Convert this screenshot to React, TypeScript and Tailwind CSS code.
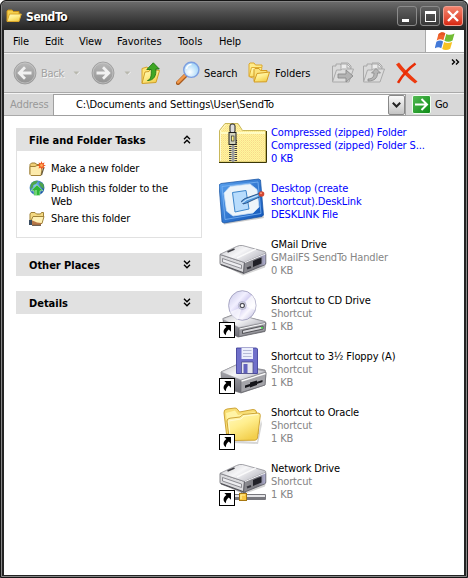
import React from "react";

type IconProps = { className?: string };

function Defs() {
  return (
    <svg width="0" height="0" className="absolute">
      <defs>
        <linearGradient id="fold" x1="0" y1="0" x2="0.6" y2="1">
          <stop offset="0" stopColor="#fffbc4" />
          <stop offset="0.5" stopColor="#ffee8e" />
          <stop offset="1" stopColor="#f3cf4c" />
        </linearGradient>
        <linearGradient id="metal" x1="0" y1="0" x2="1" y2="0.6">
          <stop offset="0" stopColor="#c8c8cc" />
          <stop offset="0.5" stopColor="#f6f6f8" />
          <stop offset="1" stopColor="#bcbcc4" />
        </linearGradient>
        <linearGradient id="side" x1="0" y1="0" x2="0" y2="1">
          <stop offset="0" stopColor="#b4b4ba" />
          <stop offset="1" stopColor="#6c6c74" />
        </linearGradient>
        <linearGradient id="face" x1="0" y1="0" x2="1" y2="0">
          <stop offset="0" stopColor="#8d8d92" />
          <stop offset="0.65" stopColor="#77777e" />
          <stop offset="1" stopColor="#b3b2d6" />
        </linearGradient>
        <linearGradient id="disc" x1="0" y1="0" x2="1" y2="1">
          <stop offset="0" stopColor="#c4c4e4" />
          <stop offset="0.35" stopColor="#f2f0ff" />
          <stop offset="0.5" stopColor="#d2cdf0" />
          <stop offset="0.7" stopColor="#faf8ff" />
          <stop offset="1" stopColor="#b4b2d8" />
        </linearGradient>
        <linearGradient id="nav" x1="0" y1="0" x2="0" y2="1">
          <stop offset="0" stopColor="#bababa" />
          <stop offset="1" stopColor="#929292" />
        </linearGradient>
        <linearGradient id="go" x1="0" y1="0" x2="1" y2="1">
          <stop offset="0" stopColor="#55bb55" />
          <stop offset="1" stopColor="#0b8a14" />
        </linearGradient>
        <linearGradient id="blue" x1="0" y1="0" x2="1" y2="1">
          <stop offset="0" stopColor="#5ba2ee" />
          <stop offset="1" stopColor="#0e52b6" />
        </linearGradient>
        <radialGradient id="lens" cx="0.4" cy="0.65" r="0.65">
          <stop offset="0" stopColor="#ffffff" />
          <stop offset="1" stopColor="#9fd4f8" />
        </radialGradient>
        <radialGradient id="globe" cx="0.35" cy="0.3" r="0.75">
          <stop offset="0" stopColor="#7fc4ff" />
          <stop offset="1" stopColor="#0b4a9c" />
        </radialGradient>
        <pattern id="dither" width="2" height="2" patternUnits="userSpaceOnUse">
          <rect width="2" height="2" fill="#fff79c" />
          <rect width="1" height="1" fill="#f8d88c" />
          <rect x="1" y="1" width="1" height="1" fill="#fbe594" />
        </pattern>
      </defs>
    </svg>
  );
}

function TitleFolder({ className }: IconProps) {
  return (
    <svg className={className} width="16" height="14" viewBox="0 0 16 14">
      <path d="M1 12V2l1-1h4l1.500 1.500H13V5" fill="#f5cf4a" stroke="#c9921c" />
      <path d="M1 12.500 3.500 5H15.300L13 12.500Z" fill="url(#fold)" stroke="#d9a62a" />
    </svg>
  );
}

function Flag() {
  return (
    <svg width="20" height="19" viewBox="0 0 20 19">
      <path d="M3.500 2C6-.2 8-.2 10.300 1.300L8.400 8.300C6 6.800 4 7 1.700 8.600Z" fill="#f0642c" />
      <path d="M11.300 1.900C14 3.400 16.500 3 19.500 1.600L17.500 8.500C15 10 12 10 9.400 8.800Z" fill="#72bc35" />
      <path d="M1.400 9.700C4 8 6 8 8.100 9.400L6.300 16.300C4.200 14.800 2 15 -.3 16.500Z" fill="#4279d8" />
      <path d="M9.100 10C11.500 11.500 14 11.300 17.200 9.900L15.200 16.700C12.500 18.300 9.500 18.300 7.200 17Z" fill="#f8c222" />
      <path d="M3.500 2C6-.2 8-.2 10.300 1.300L9.700 3.500C7.500 2.200 5 2.400 3 4Z" fill="#d9461c" opacity=".5" />
    </svg>
  );
}

function NavArrow({ flip = false }: { flip?: boolean }) {
  return (
    <svg width="24" height="24" viewBox="0 0 24 24" className={flip ? "-scale-x-100" : ""}>
      <circle cx="12" cy="12" r="11" fill="url(#nav)" stroke="#999" strokeWidth=".8" />
      <circle cx="12" cy="12" r="10" fill="none" stroke="#c8c8c8" strokeWidth=".7" />
      <path d="M18.500 12H7M12 6.300 6.300 12 12 17.700" fill="none" stroke="#f1f1f1" strokeWidth="2.800" />
    </svg>
  );
}

function Caret() {
  return (
    <svg width="7" height="4" viewBox="0 0 7 4">
      <path d="M.5.500h5.500L3.200 3.500Z" fill="#b8b8ad" />
      <path d="M4 4 7 1" stroke="#efefef" strokeWidth=".7" />
    </svg>
  );
}

function UpFolder() {
  return (
    <svg width="20" height="23" viewBox="0 0 20 23">
      <path d="M1 21V6.500l5-1.500 2 2 7-1V19Z" fill="#ffe477" stroke="#d6a52d" />
      <path d="M1 21.500 4 10l4-.5 1-2 9.500 1L15 20.500Z" fill="url(#fold)" stroke="#d0a02a" />
      <path d="M6.500 18.500C10 17.500 10.500 14 10.200 7.500H5.800L12.300.800 18.300 7H14.800C15.500 13.500 13 18.500 6.500 18.500Z" fill="#3fa725" stroke="#1f7714" strokeWidth=".9" />
    </svg>
  );
}

function SearchIcon() {
  return (
    <svg width="24" height="24" viewBox="0 0 24 24">
      <path d="M2 22 9.500 14.500" stroke="#a85b1e" strokeWidth="4.200" strokeLinecap="round" />
      <path d="M2 21.300 9 14.300" stroke="#f29a4c" strokeWidth="2.400" strokeLinecap="round" />
      <circle cx="15.300" cy="8.800" r="7.600" fill="url(#lens)" stroke="#7c9ee0" strokeWidth="1.400" />
      <path d="M10.500 8a5 5 0 0 1 5-4.500" fill="none" stroke="#fff" strokeWidth="1.600" />
    </svg>
  );
}

function FoldersIcon() {
  return (
    <svg width="23" height="22" viewBox="0 0 23 22">
      <path d="M1 14.500V2l1-1h4l1.500 2H14v2M1 14.500 5 16" fill="#ffec8a" stroke="#dca72c" />
      <path d="M1.200 14.500 3.500 5.500H14L12 15Z" fill="url(#fold)" stroke="#e0ae35" />
      <path d="M6 19V7.500l1-1h4L12.500 8.500H19v3L12 15Z" fill="#fbe27a" stroke="#d49c22" />
      <path d="M6 20 9 11.500 21.500 10 18.500 19.800Z" fill="url(#fold)" stroke="#d49c22" />
    </svg>
  );
}

function GrayFile({ copy = false }: { copy?: boolean }) {
  return (
    <svg width="24" height="22" viewBox="0 0 24 22">
      <path d="M1.500 19V4H5V2h4l1 1V1h7l3 3v7" fill="#dadada" stroke="#a8a8a8" />
      <path d="M10 13V2h6l3.500 3.500V13Z" fill="#ececec" stroke="#aaa" />
      <path d="M16 2v4h3.500" fill="none" stroke="#aaa" />
      <path d="M1.500 20 5.500 8H10l1.500-1H22.500L18 20Z" fill="#dcdcdc" stroke="#aaa" />
      {copy ? (
        <path d="M6 17c5 0 6-3 6-6H9.500L14 6.500 18.500 11H15.500c0 5-3 8-9.500 8Z" fill="#b6b6b6" stroke="#888" strokeWidth=".8" />
      ) : (
        <path d="M7 12h8V8l7 6-7 6v-4H7Z" fill="#b3b3b3" stroke="#8b8b8b" strokeWidth=".9" />
      )}
    </svg>
  );
}

function DeleteIcon() {
  return (
    <svg width="24" height="23" viewBox="0 0 24 23">
      <path d="M1 2.500 4 .5Q10 8.500 22.500 19.500L20 21.500Q8 12.500 1 2.500Z" fill="#ed3b10" />
      <path d="M20.500 1.500Q10 9 3 20.800" fill="none" stroke="#e92d05" strokeWidth="2.600" />
    </svg>
  );
}

function NewFolder() {
  return (
    <svg width="17" height="16" viewBox="0 0 17 16">
      <path d="M1 13V3.500L2.500 2H6l2 1.500h5V6" fill="#f0cf75" stroke="#9d7f35" />
      <path d="M1 13.500V5.500h5l2-1h5.500L12 14.500H2Z" fill="#fdebac" stroke="#a38238" />
      <path d="M12.500 14 15 6" stroke="#635638" strokeWidth="1.200" />
      <path d="m12.500 0 .8 2.300 2.200-.8-.8 2.200 2.300.8-2.300.8.8 2.200-2.200-.8-.8 2.300-.8-2.300-2.200.8.8-2.200L8 4.500l2.300-.8-.8-2.200 2.200.8Z" fill="#f05a21" />
      <circle cx="12.500" cy="4.400" r="1.300" fill="#ffb15b" />
    </svg>
  );
}

function GlobeIcon() {
  return (
    <svg width="17" height="17" viewBox="0 0 17 17">
      <circle cx="8" cy="7.800" r="7.400" fill="url(#globe)" />
      <path d="M2 4C4 .8 7 .5 9 1L7 4 4.500 5 3.500 8 1 9ZM11 2l3.500 2L15 9l-3-2-2-3Z" fill="#4fa54b" />
      <path d="M5 15.500V10.800H1.800L8 4.800l6.200 6H11v4.700Z" fill="#2eb638" stroke="#d4f2d4" strokeWidth=".6" />
      <path d="M5.800 15V10H8V15Z" fill="#71d475" />
    </svg>
  );
}

function ShareIcon() {
  return (
    <svg width="17" height="16" viewBox="0 0 17 16">
      <path d="M1 11V3L2 1.500h4L7.500 3h4l1-1.500h2V5" fill="#f4d982" stroke="#a08237" />
      <path d="M1.500 11 4 5.500h11L13 12.500H5Z" fill="#fff1b4" stroke="#a08237" />
      <path d="M.5 9.500h3L8 11.500l4 .5v2.200H4L.5 12.500Z" fill="#b77747" />
      <path d="M0 9h3v5H0Z" fill="#394c60" />
      <path d="M3 14.300h9" stroke="#514334" />
    </svg>
  );
}

function Chevrons({ up = false }: { up?: boolean }) {
  return (
    <svg width="8" height="9" viewBox="0 0 8 9" className={up ? "-scale-y-100" : ""}>
      <path d="M1 .7 4 3.700 7 .7M1 4.700 4 7.700 7 4.700" fill="none" stroke="#000" strokeWidth="1.400" />
    </svg>
  );
}

function Shortcut() {
  return (
    <g>
      <rect x=".5" y="32.500" width="15" height="15" fill="#fff" stroke="#000" />
      <path d="M5.300 35H12V41.700L9.800 39.500C7.700 41 7 42.500 6.800 45.300 3.500 43 4 39.500 7.400 37.100Z" fill="#000" />
    </g>
  );
}

function ZipIcon() {
  return (
    <svg width="48" height="48" viewBox="0 0 48 48">
      <path d="M.5 40V8.500L6 1.500h13l4.500 7H46.500V40Z" fill="url(#dither)" stroke="#c9b85a" />
      <path d="M1.500 39V9L6.500 2.500" fill="none" stroke="#fffbd0" />
      <path d="M1 11h45" stroke="#fffcc4" strokeWidth="2" />
      <path d="M0 40.500H47.500V9" fill="none" stroke="#3a3608" />
      <path d="M14 18V40" stroke="#444" strokeWidth="8" strokeDasharray="1 1" />
      <path d="M14 18V40" stroke="#c4c4c4" strokeWidth="3" />
      <path d="M14 18V40" stroke="#777" strokeWidth="1" />
      <rect x="11" y="2" width="5" height="9" rx="2" fill="#ddd" stroke="#222" />
      <rect x="10" y="10.500" width="7" height="12" fill="#d2d2bc" stroke="#1c1c1c" />
      <rect x="12.500" y="14" width="2.500" height="5" fill="#faf080" stroke="#333" strokeWidth=".7" />
    </svg>
  );
}

function DesktopIcon() {
  return (
    <svg width="48" height="48" viewBox="0 0 48 48">
      <path d="M5 46.500 45 40 44 36 4 43Z" fill="#999" opacity=".5" />
      <path d="M0 7 2 5.500 39.500 1l2 1L44.500 37 43 38.500 5 45 3 44Z" fill="url(#blue)" stroke="#134f9f" strokeWidth=".7" />
      <path d="M3 8.500 39 4 42 35.500 6 41.500Z" fill="none" stroke="#7cb5f4" strokeWidth=".8" />
      <path d="M11 8.500 31 6 38 11.500 40 29 34 35 14 38 7.500 33 5 15Z" fill="#edf4fa" stroke="#c8dff6" strokeWidth=".8" />
      <path d="M13.500 14.500 27 12.500 30 31 16 34Z" fill="#b8dcfc" stroke="#3e86cb" />
      <path d="M24 26 22.500 23 26 20.500 40 15.500l1.500 3L27.500 25Z" fill="#5399dc" stroke="#173f76" strokeWidth=".8" />
      <path d="m23 25 4-3 12-4.500" fill="none" stroke="#c7e3fc" strokeWidth="1.200" />
      <circle cx="42.500" cy="16" r="2.800" fill="#d44732" />
      <circle cx="42" cy="15.300" r="1" fill="#f79b84" />
    </svg>
  );
}

function DriveBody() {
  return (
    <g>
      <path d="M4 31 24 41.500 46 33.500 47 29 25 38Z" fill="#888" opacity=".35" />
      <path d="M1 20.500 25.500 28.500 24.500 39.500 2 31Q1 30.500 1 29Z" fill="#dadadd" stroke="#6b6b70" strokeWidth=".8" />
      <path d="M3.500 24.500 22.500 31V34.500L3.500 28Z" fill="#ededf0" stroke="#77777d" strokeWidth=".8" />
      <path d="M2 30.500 24.500 38.800" stroke="#4e4e54" strokeWidth="1.200" />
      <path d="M25.500 28 46.800 19.500V29Q46.800 30.500 45.500 31L24.500 39.500Z" fill="url(#face)" stroke="#56565e" strokeWidth=".8" />
      <path d="M1 20.300 17.500 12.500Q20.500 11 23.500 11.500L45.500 17.500Q47.300 18.200 46.500 19.500L25.500 28.500Z" fill="url(#metal)" stroke="#808087" strokeWidth=".7" />
      <path d="M26 28.500 46.500 20" stroke="#f1f1f4" />
      <path d="M34 27 42.500 23.500V29.500L34 33Z" fill="#202027" />
      <path d="M28 34.500 32 33" stroke="#35353d" strokeWidth="2" />
      <path d="M8.500 18 15.500 15" stroke="#3f3f45" strokeWidth="1.700" />
      <path d="M18 24 37 15" stroke="#fff" strokeWidth="1.500" opacity=".8" />
    </g>
  );
}

function DriveIcon() {
  return (
    <svg width="48" height="48" viewBox="0 0 48 48">
      <DriveBody />
    </svg>
  );
}

function LowDrive({ led }: { led: boolean }) {
  return (
    <g>
      <path d="M4 28.500 16 24 46 31.500 47 33 46 41.500 19 47 5 39Z" fill="url(#side)" stroke="#5d5d63" strokeWidth=".7" />
      <path d="M3.500 29 17 24 46.500 32 20 37.500Z" fill="url(#metal)" stroke="#a5a5ab" strokeWidth=".5" />
      <path d="M20 38.500 46.500 33 46 41 20 46.500Z" fill="#9a9aa0" stroke="#66666c" strokeWidth=".6" />
      <path d="M20.500 39 46 33.500" stroke="#f4f4f5" strokeWidth="1.200" />
      {led ? (
        <>
          <path d="M23.500 40.500 44 36V39L23.500 43.500Z" fill="#d8d8dc" stroke="#37373b" strokeWidth=".8" />
          <path d="M42 38 44 37.500" stroke="#44e144" strokeWidth="1.600" />
        </>
      ) : (
        <>
          <path d="M25 40.500 43 37V38.500L25 42.500Z" fill="#15151a" />
          <path d="M30 38.500 38 37V41L30 43Z" fill="#15151a" />
        </>
      )}
    </g>
  );
}

function CdIcon() {
  return (
    <svg width="48" height="48" viewBox="0 0 48 48">
      <LowDrive led />
      <ellipse cx="23.300" cy="15.500" rx="13.700" ry="14.800" fill="url(#disc)" stroke="#9897b8" strokeWidth=".8" />
      <path d="M23 15 33 5Q38 12 36 20Z" fill="#fff" opacity=".75" />
      <path d="M23 17 11 22Q14 28 19 30Z" fill="#fff" opacity=".65" />
      <circle cx="23.300" cy="15.500" r="4" fill="#dedeef" stroke="#9c9cbb" strokeWidth=".6" />
      <circle cx="23.300" cy="15.500" r="2.100" fill="#fff" stroke="#52525c" strokeWidth="1.200" />
      <Shortcut />
    </svg>
  );
}

function FloppyIcon() {
  return (
    <svg width="48" height="48" viewBox="0 0 48 48">
      <path d="M2 26 17 19 46 24 47 27 46 39 22 47 3 41Z" fill="url(#side)" stroke="#77777d" strokeWidth=".7" />
      <path d="M2 26 17 19 47 25.500 22 34Z" fill="url(#metal)" stroke="#99999f" strokeWidth=".6" />
      <path d="M22 34.500 47 26.500 46 39 22 46.500Z" fill="#a4a4a9" stroke="#66666c" strokeWidth=".6" />
      <path d="M22.500 35 46.500 27.500" stroke="#fafafa" strokeWidth="1.400" />
      <path d="M26 39.500 43.500 34V36L26 42Z" fill="#15151a" />
      <path d="M31 36.500 38 34.500V39L31 41.500Z" fill="#15151a" />
      <path d="M17.500 2H37.500L38.500 3V27.500H17.500Z" fill="#7070ca" stroke="#42429a" strokeWidth=".9" />
      <path d="M22.500 2H34V13H22.500Z" fill="#eceffc" />
      <path d="M24 4.500H32.500M24 7.500H32.500M24 10.500H32.500" stroke="#b6bbd6" />
      <path d="M22.500 16H34V27.500H22.500Z" fill="#e5e6ef" stroke="#43437c" strokeWidth=".7" />
      <path d="M24.500 18H28.500V27H24.500Z" fill="#6262bd" />
      <Shortcut />
    </svg>
  );
}

function FolderIcon() {
  return (
    <svg width="48" height="48" viewBox="0 0 48 48">
      <path d="M11 38 38 40 42 18 43 22 39 42 14 41Z" fill="#999" opacity=".4" />
      <path d="M7.500 32 5 11Q4.500 7.500 8 7L16 6Q18 6 19 8L20.500 10 34 7.500Q37 7.500 37.500 10L39 32Z" fill="#f8de74" stroke="#c89c2a" strokeWidth=".9" />
      <path d="M7 11 16 8.500 19 13 36 10 38 20 9 29Z" fill="#fff4a6" />
      <path d="M13 38.500Q10.500 38 10 35L8 19Q8 16.500 11 16.200L21 15 24 12.500 39 11Q41.500 11 41.300 13.500L38.500 36Q38 38 36 38.200Z" fill="url(#fold)" stroke="#c89c2a" strokeWidth=".9" />
      <path d="M11 34 9.500 19 22 17 25 14 39 12.500" fill="none" stroke="#fffad0" />
      <Shortcut />
    </svg>
  );
}

function NetworkIcon() {
  return (
    <svg width="48" height="48" viewBox="0 0 48 48">
      <path d="M22 27h5v10h-5Z" fill="#77777f" />
      <path d="M23.500 28V36" stroke="#ddd" strokeWidth="1.500" />
      <rect x="14" y="36" width="33" height="6" rx="1" fill="#77777d" />
      <path d="M15 38H46" stroke="#e4e4e7" strokeWidth="2" />
      <g transform="translate(0 -5)">
        <DriveBody />
      </g>
      <rect x="20.500" y="35.500" width="7" height="7" fill="#f9c740" stroke="#a77710" />
      <path d="M22 41V37H26" fill="none" stroke="#fff29b" strokeWidth="1.200" />
      <Shortcut />
    </svg>
  );
}

const files = [
  { icon: <ZipIcon />, lines: ["Compressed (zipped) Folder", "Compressed (zipped) Folder S...", "0 KB"], blue: true },
  { icon: <DesktopIcon />, lines: ["Desktop (create", "shortcut).DeskLink", "DESKLINK File"], blue: true },
  { icon: <DriveIcon />, lines: ["GMail Drive", "GMailFS SendTo Handler", "0 KB"] },
  { icon: <CdIcon />, lines: ["Shortcut to CD Drive", "Shortcut", "1 KB"] },
  { icon: <FloppyIcon />, lines: ["Shortcut to 3½ Floppy (A)", "Shortcut", "1 KB"] },
  { icon: <FolderIcon />, lines: ["Shortcut to Oracle", "Shortcut", "1 KB"] },
  { icon: <NetworkIcon />, lines: ["Network Drive", "Shortcut", "1 KB"] },
];

function PanelHeader({ title, open = false }: { title: string; open?: boolean }) {
  return (
    <div className="flex h-[23px] items-center justify-between bg-[#e1e1e1] pr-[11px] pl-[13px]">
      <span className="pt-[2px] font-bold tracking-[-0.02px]">{title}</span>
      <Chevrons up={open} />
    </div>
  );
}

export default function App() {
  return (
    <div className="h-[578px] w-[468px] overflow-hidden bg-white font-['DejaVu_Sans_Condensed','DejaVu_Sans',sans-serif] text-[11px] leading-[13px] font-normal tracking-[-0.3px] whitespace-nowrap text-black [font-stretch:condensed]">
      <Defs />
      <div className="flex h-[578px] flex-col rounded-t-[6px] border border-[#151515] bg-[#242424]">
        <div className="flex min-h-0 flex-1 flex-col rounded-t-[5px] border border-[#858585] bg-[#242424]">
          <header className="flex h-[28px] shrink-0 items-center rounded-t-[4px] bg-linear-to-b from-[#6b6b6b] via-[#484848] via-45% to-[#242424] pr-[3px] pl-[4px]">
            <TitleFolder />
            <span className="ml-[4px] pt-[2px] text-[12px] font-bold tracking-[-0.4px] text-white [text-shadow:1px_1px_1px_#000]">SendTo</span>
            <div className="ml-auto flex gap-[3px]">
              <div className="flex h-[20px] w-[20px] items-end rounded-[3px] border border-[#8b8b8b] bg-linear-to-b from-[#606060] to-[#383838] pb-[3px] pl-[4px]">
                <div className="h-[3px] w-[7px] bg-white" />
              </div>
              <div className="flex h-[20px] w-[20px] items-center justify-center rounded-[3px] border border-[#8b8b8b] bg-linear-to-b from-[#606060] to-[#383838]">
                <div className="h-[11px] w-[11px] border border-t-[3px] border-white" />
              </div>
              <div className="flex h-[20px] w-[20px] items-center justify-center rounded-[3px] border border-[#f0a093] bg-linear-to-b from-[#f1826c] to-[#d9240c]">
                <svg width="12" height="12" viewBox="0 0 12 12"><path d="m1 1 10 10M11 1 1 11" stroke="#fff" strokeWidth="2.400" /></svg>
              </div>
            </div>
          </header>

          <div className="mx-[2px] mb-[1px] flex min-h-0 flex-1 flex-col bg-white">
            <nav className="flex h-[23px] shrink-0 border-b border-[#aaa] bg-[#dadada]">
              <div className="flex flex-1 items-center border-r border-[#aaa] pl-[9px] tracking-[-0.15px]">
                <span className="w-[32px]">File</span>
                <span className="w-[34px]">Edit</span>
                <span className="w-[38px]">View</span>
                <span className="w-[61px] tracking-[0px]">Favorites</span>
                <span className="w-[41px] tracking-[0.05px]">Tools</span>
                <span>Help</span>
              </div>
              <div className="flex w-[38px] items-center justify-center bg-white"><Flag /></div>
            </nav>

            <div className="flex h-[40px] shrink-0 items-center border-t border-b border-t-[#f2f2f2] border-b-[#aaa] bg-[#d8d8d8] pl-[9px]">
              <NavArrow />
              <span className="ml-[4px] w-[32px] text-[#a2a2a2] [text-shadow:1px_1px_0_#f6f6f6]">Back</span>
              <Caret />
              <div className="ml-[11px]"><NavArrow flip /></div>
              <div className="ml-[9px]"><Caret /></div>
              <div className="ml-[10px]"><UpFolder /></div>
              <div className="ml-[15px]"><SearchIcon /></div>
              <span className="ml-[4px] w-[44px] tracking-[-0.1px]">Search</span>
              <FoldersIcon />
              <span className="ml-[4px] w-[56px] tracking-[-0.05px]">Folders</span>
              <GrayFile />
              <div className="ml-[7px]"><GrayFile copy /></div>
              <div className="ml-[9px]"><DeleteIcon /></div>
              <div className="mt-[5px] ml-auto self-start pr-[4px]">
                <svg width="9" height="6" viewBox="0 0 9 6"><path d="m1 .5 2.500 2.500L1 5.500M5 .5 7.500 3 5 5.500" fill="none" stroke="#000" strokeWidth="1.400" /></svg>
              </div>
            </div>

            <div className="flex h-[23px] shrink-0 items-center border-t border-b border-t-[#f4f4f4] border-b-[#aaa] bg-[#d8d8d8] pl-[6px]">
              <span className="w-[43px] tracking-[-0.1px] text-[#999]">Address</span>
              <div className="flex h-[22px] w-[353px] border border-[#a0a0a0] bg-white">
                <span className="flex-1 self-center pl-[22px] tracking-[-0.05px]">C:\Documents and Settings\User\SendTo</span>
                <div className="flex w-[17px] items-center justify-center rounded-[2px] border border-[#888] bg-linear-to-b from-[#fafafa] to-[#c4c4c4]">
                  <svg width="9" height="6" viewBox="0 0 9 6"><path d="M.8.800 4.500 4.500 8.200.800" fill="none" stroke="#222" strokeWidth="2" /></svg>
                </div>
              </div>
              <svg className="ml-[6px]" width="19" height="19" viewBox="0 0 19 19">
                <rect x=".5" y=".5" width="18" height="18" rx="1.500" fill="url(#go)" stroke="#f0fff0" />
                <path d="M3 9.500H15M9.500 4 15 9.500 9.500 15" fill="none" stroke="#fff" strokeWidth="2" />
              </svg>
              <span className="ml-[4px]">Go</span>
            </div>

            <main className="flex min-h-0 flex-1">
              <aside className="flex w-[198px] flex-col gap-[15px] pt-[12px] pl-[12px]">
                <section className="h-[110px]">
                  <PanelHeader title="File and Folder Tasks" open />
                  <div className="h-[87px] border border-t-0 border-[#e1e1e1] pt-[10px] pl-[12px] tracking-[-0.15px]">
                    <div className="flex h-[19px] gap-[5px]"><NewFolder /><span className="pt-[1px]">Make a new folder</span></div>
                    <div className="flex h-[31px] gap-[5px]"><GlobeIcon /><span className="pt-[2px]">Publish this folder to the<br />Web</span></div>
                    <div className="flex h-[18px] gap-[5px]"><ShareIcon /><span className="pt-[1px]">Share this folder</span></div>
                  </div>
                </section>
                <PanelHeader title="Other Places" />
                <PanelHeader title="Details" />
              </aside>
              <ul className="flex flex-col gap-[8px] pt-[6px] pl-[17px]">
                {files.map((file) => (
                  <li key={file.lines[0]} className="flex h-[48px] gap-[4px]">
                    {file.icon}
                    <div className={file.blue ? "pt-[4px] tracking-[-0.13px] text-[#0000ff]" : "pt-[4px] tracking-[-0.14px] text-[#858585]"}>
                      <div className={file.blue ? "" : "text-black"}>{file.lines[0]}</div>
                      <div>{file.lines[1]}</div>
                      <div>{file.lines[2]}</div>
                    </div>
                  </li>
                ))}
              </ul>
            </main>
          </div>
        </div>
      </div>
    </div>
  );
}
